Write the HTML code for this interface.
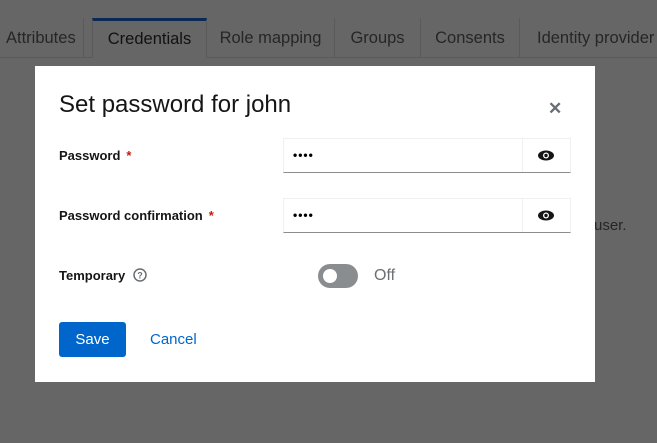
<!DOCTYPE html><html><head><style>
body{margin:0;width:657px;height:443px;background:#666;font-family:"Liberation Sans",sans-serif;position:relative;overflow:hidden}
.tabs{position:absolute;top:18px;left:0;width:657px;height:39px;border-bottom:1px solid #5a5a5a}
.tab{position:absolute;top:0;height:39px;line-height:40px;font-size:16.5px;color:#262626;text-align:center;border-right:1px solid #5a5a5a;box-sizing:border-box;white-space:nowrap}
.act{border-top:3px solid #0a2a55;line-height:36px;color:#111;border-left:1px solid #5a5a5a;height:40px;background:#666}
.user{position:absolute;left:594px;top:217px;font-size:15px;color:#262626}
.modal{position:absolute;left:35px;top:66px;width:560px;height:316px;background:#fff}
h1{position:absolute;left:24px;top:25px;margin:0;font-size:24px;font-weight:normal;color:#151515}
.x{position:absolute;left:513px;top:33px;font-size:17px;color:#6a6e73;font-weight:bold}
.lbl{position:absolute;left:24px;font-size:13px;font-weight:bold;color:#151515}
.req{color:#c9190b;margin-left:6px}
.inp{position:absolute;left:248px;width:288px;height:35px;box-sizing:border-box;border:1px solid #f0f0f0;border-bottom:1px solid #8a8d90}
.inp .d{position:absolute;left:9px;top:9px;font-size:12px;letter-spacing:1px;font-weight:bold}
.eye{position:absolute;right:0;top:-1px;width:47px;height:34px;border-left:1px solid #f0f0f0}
.tog{position:absolute;left:283px;top:198px;width:40px;height:24px;border-radius:12px;background:#8a8d90}
.tog:after{content:"";position:absolute;left:5px;top:5px;width:14px;height:14px;border-radius:50%;background:#fff}
.off{position:absolute;left:339px;top:201px;font-size:16px;color:#6a6e73}
.save{position:absolute;left:24px;top:256px;width:67px;height:35px;background:#0066cc;color:#fff;border-radius:3px;font-size:15px;line-height:35px;text-align:center}
.cancel{position:absolute;left:115px;top:265px;font-size:15px;color:#0066cc}
</style></head><body>
<div class="tabs">
<div class="tab" style="left:0;width:84px;text-align:left;padding-left:6px">Attributes</div>
<div class="tab act" style="left:92px;width:115px">Credentials</div>
<div class="tab" style="left:207px;width:128px">Role mapping</div>
<div class="tab" style="left:335px;width:86px">Groups</div>
<div class="tab" style="left:421px;width:99px">Consents</div>
<div class="tab" style="left:520px;width:137px;border-right:0;text-align:left;padding-left:17px">Identity provider</div>
</div>
<div class="user">user.</div>
<div class="modal">
<h1>Set password for john</h1>
<div class="x">✕</div>
<div class="lbl" style="top:82px">Password<span class="req">*</span></div>
<div class="inp" style="top:72px"><span class="d">••••</span><div class="eye"><svg width="47" height="35" viewBox="0 0 47 35"><ellipse cx="23" cy="17.5" rx="8" ry="5" fill="#151515"/><circle cx="23" cy="17.5" r="3" fill="#fff"/><circle cx="23" cy="17.5" r="1.7" fill="#151515"/></svg></div></div>
<div class="lbl" style="top:142px">Password confirmation<span class="req">*</span></div>
<div class="inp" style="top:132px"><span class="d">••••</span><div class="eye"><svg width="47" height="35" viewBox="0 0 47 35"><ellipse cx="23" cy="17.5" rx="8" ry="5" fill="#151515"/><circle cx="23" cy="17.5" r="3" fill="#fff"/><circle cx="23" cy="17.5" r="1.7" fill="#151515"/></svg></div></div>
<div class="lbl" style="top:202px">Temporary <svg width="14" height="14" viewBox="0 0 14 14" style="vertical-align:-2px;margin-left:4px"><circle cx="7" cy="7" r="6" fill="none" stroke="#6a6e73" stroke-width="1.5"/><text x="7" y="10.5" font-size="9" font-weight="bold" text-anchor="middle" fill="#6a6e73" font-family="Liberation Sans">?</text></svg></div>
<div class="tog"></div><div class="off">Off</div>
<div class="save">Save</div><div class="cancel">Cancel</div>
</div>
</body></html>
